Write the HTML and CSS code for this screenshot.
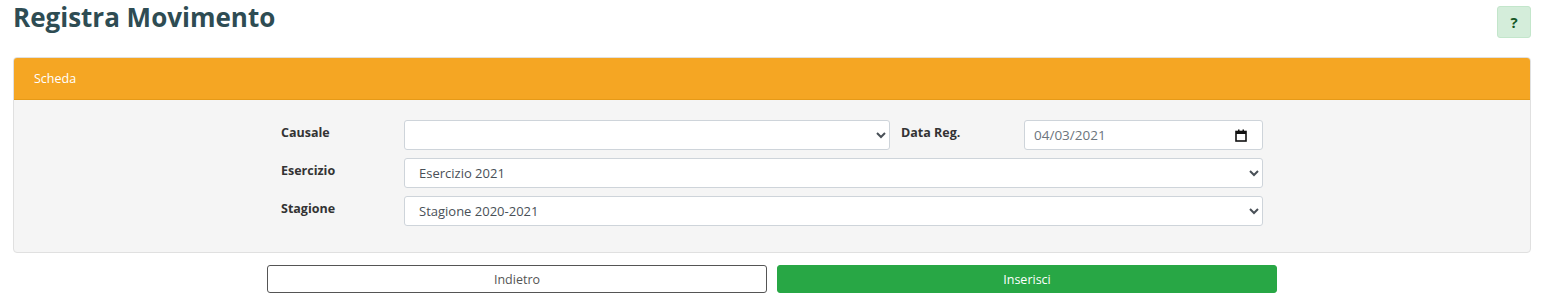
FILE: index.html
```html
<!DOCTYPE html>
<html lang="it">
<head>
    <meta charset="UTF-8">
    <meta name="viewport" content="width=device-width, initial-scale=1.0">
    <title>Registra Movimento</title>
    <link rel="stylesheet" href="styles.css">
</head>
<body>
    <div class="page">
        <div class="page-head">
            <h1 class="title">Registra Movimento</h1>
            <button class="help" type="button">?</button>
        </div>

        <div class="card">
            <div class="card-header">Scheda</div>
            <div class="card-body">
                <div class="form">
                    <div class="form-row">
                        <label class="label">Causale</label>
                        <select class="control grow">
                            <option></option>
                        </select>
                        <label class="label label-side">Data Reg.</label>
                        <div class="control date">
                            <input class="date-text" type="text" value="04/03/2021">
                            <svg class="date-icon" width="12" height="13" viewBox="0 0 12 13">
                                <rect x="1" y="2.5" width="10" height="9.5" fill="none" stroke="#111" stroke-width="1.6"/>
                                <rect x="1" y="2.5" width="10" height="2.5" fill="#111"/>
                                <rect x="3" y="0.5" width="1.5" height="2.5" fill="#111"/>
                                <rect x="7.5" y="0.5" width="1.5" height="2.5" fill="#111"/>
                            </svg>
                        </div>
                    </div>
                    <div class="form-row">
                        <label class="label">Esercizio</label>
                        <select class="control grow">
                            <option>Esercizio 2021</option>
                        </select>
                    </div>
                    <div class="form-row">
                        <label class="label">Stagione</label>
                        <select class="control grow">
                            <option>Stagione 2020-2021</option>
                        </select>
                    </div>
                </div>
            </div>
        </div>

        <div class="actions">
            <button class="btn btn-back" type="button">Indietro</button>
            <button class="btn btn-save" type="button">Inserisci</button>
        </div>
    </div>
</body>
</html>
```

FILE: styles.css
```css
* {
    box-sizing: border-box;
}

body {
    margin: 0;
    background: #fff;
    color: #333;
    font-family: 'Open Sans', 'Liberation Sans', sans-serif;
    font-size: 13px;
}

.page {
    padding: 0 11px 0 13px;
}

.page-head {
    display: flex;
    justify-content: space-between;
    align-items: flex-start;
    height: 57px;
}

.title {
    margin: 2px 0 0;
    font-size: 26px;
    line-height: 30px;
    font-weight: 700;
    color: #2e4c53;
}

.help {
    margin-top: 6px;
    width: 34px;
    height: 32px;
    padding: 0;
    background: #d4edda;
    border: 1px solid #c3e6cb;
    border-radius: 3px;
    color: #155724;
    font-family: inherit;
    font-size: 15px;
    font-weight: 700;
}

.card {
    border: 1px solid #e0e0e0;
    border-radius: 4px;
    overflow: hidden;
    background: #f5f5f5;
}

.card-header {
    height: 42px;
    padding: 0 20px;
    display: flex;
    align-items: center;
    background: #f5a623;
    color: #fff;
    font-size: 12.5px;
    border-bottom: 1px solid #e69a17;
}

.card-body {
    padding: 20px 0 26px;
}

.form {
    width: 1012px;
    margin: 0 auto;
    padding: 0 15px;
    display: flex;
    flex-direction: column;
    gap: 8px;
}

.form-row {
    display: flex;
    align-items: center;
}

.label {
    width: 123px;
    flex: none;
    font-weight: 700;
    font-size: 12.5px;
    color: #333;
    align-self: flex-start;
    padding-top: 4px;
}

.label-side {
    margin-left: 11px;
}

.control {
    height: 30px;
    border: 1px solid #ced4da;
    border-radius: 3px;
    background: #fff;
    color: #495057;
    font-family: inherit;
    font-size: 13px;
    padding: 0 10px;
}

.grow {
    flex: 1;
    min-width: 0;
}

.date {
    width: 239px;
    flex: none;
    display: flex;
    align-items: center;
    padding: 0 15px 0 9px;
}

.date-text {
    flex: 1;
    min-width: 0;
    border: none;
    outline: none;
    background: transparent;
    padding: 0;
    font-family: inherit;
    font-size: 13.5px;
    color: #6c757d;
}

.date-icon {
    flex: none;
}

.actions {
    display: flex;
    justify-content: center;
    gap: 10px;
    margin-top: 12px;
}

.btn {
    width: 500px;
    height: 28px;
    border-radius: 3px;
    font-family: inherit;
    font-size: 12.5px;
}

.btn-back {
    background: #fff;
    border: 1px solid #555;
    color: #555;
}

.btn-save {
    background: #28a745;
    border: 1px solid #28a745;
    color: #fff;
}
```
